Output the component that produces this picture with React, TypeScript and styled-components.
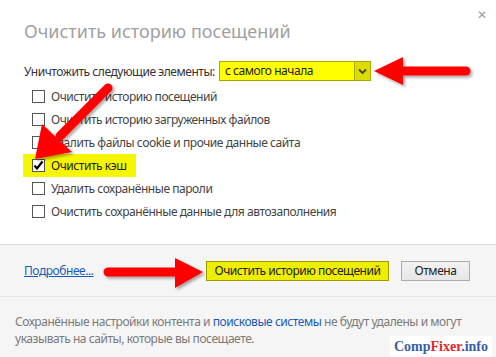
import React from 'react'
import styled, { createGlobalStyle } from 'styled-components'

const GlobalStyle = createGlobalStyle`
  html, body {
    margin: 0;
    padding: 0;
    background: #fff;
  }
`

const Dialog = styled.div`
  position: relative;
  width: 496px;
  height: 357px;
  overflow: hidden;
  background: #fff;
  font-family: "Noto Sans", "Open Sans", sans-serif;
  font-size: 12px;
  letter-spacing: -0.45px;
  color: #333;
`

const CloseButton = styled.span`
  position: absolute;
  top: 9px;
  right: 9px;
  font-size: 12px;
  line-height: 12px;
  color: #9a9a9a;
`

const Title = styled.h1`
  margin: 0;
  padding: 18px 24px 0;
  height: 26px;
  font-size: 18px;
  line-height: 26px;
  font-weight: 400;
  letter-spacing: 0;
  color: #a0a0a0;
`

const Content = styled.div`
  padding: 17px 24px 21px 23px;
`

const RangeRow = styled.div`
  display: flex;
  align-items: center;
  height: 20px;
  padding-left: 1px;
  gap: 4px;
`

const Select = styled.div`
  display: flex;
  width: 152px;
  height: 20px;
  box-sizing: border-box;
  border: 1px solid #a9a900;
  background: #ffff00;
`

const SelectValue = styled.span`
  flex: 1;
  padding-left: 5px;
  line-height: 18px;
  color: #222;
`

const SelectToggle = styled.span`
  width: 15px;
  display: flex;
  align-items: center;
  justify-content: center;
  background: #dcdc00;
  border-left: 1px solid #a9a900;
`

const Options = styled.div`
  display: flex;
  flex-direction: column;
  margin-top: 4px;
`

const Option = styled.label<{ $marked?: boolean }>`
  display: flex;
  align-items: center;
  width: fit-content;
  height: 23px;
  padding: 0 10px 0 9px;
  gap: 6px;
  background: ${p => (p.$marked ? '#f6f600' : 'transparent')};
  color: ${p => (p.$marked ? '#222' : '#444')};
`

const Box = styled.span`
  width: 13px;
  height: 13px;
  box-sizing: border-box;
  border: 1px solid #555;
  background: #fff;
  display: flex;
  align-items: center;
  justify-content: center;
`

const Footer = styled.div`
  display: flex;
  align-items: center;
  height: 51px;
  padding: 0 26px 0 24px;
  border-top: 1px solid #dcdcdc;
  border-bottom: 1px solid #e4e4e4;
  background: #f5f5f5;
`

const MoreLink = styled.a`
  color: #1a5ab8;
  text-decoration: underline;
  margin-right: auto;
`

const Button = styled.button<{ $primary?: boolean }>`
  height: 20px;
  width: ${p => (p.$primary ? '183px' : '69px')};
  box-sizing: border-box;
  margin-left: ${p => (p.$primary ? '0' : '12px')};
  padding: 0;
  font-family: inherit;
  font-size: 12px;
  letter-spacing: inherit;
  color: #222;
  border: 1px solid ${p => (p.$primary ? '#9c9c00' : '#acacac')};
  background: ${p => (p.$primary ? '#eeee00' : 'linear-gradient(#f2f2f2, #e6e6e6)')};
`

const Note = styled.p`
  margin: 0;
  padding: 16px 15px 0;
  line-height: 17px;
  color: #7a7a7a;
  background: #f5f5f5;
  height: 60px;
`

const NoteLink = styled.span`
  color: #1a5ab8;
`

const Watermark = styled.div`
  position: absolute;
  right: 4px;
  bottom: 0;
  height: 21px;
  padding: 0 4px;
  background: #fff;
  font-family: "Liberation Serif", serif;
  font-weight: 700;
  font-size: 14px;
  letter-spacing: 0;
  line-height: 22px;
  color: #3a5ea8;
`

const Red = styled.span`
  color: #e3262a;
`

const Arrows = styled.svg`
  position: absolute;
  left: 0;
  top: 0;
  pointer-events: none;
`

const options = [
  'Очистить историю посещений',
  'Очистить историю загруженных файлов',
  'Удалить файлы cookie и прочие данные сайта',
  'Очистить кэш',
  'Удалить сохранённые пароли',
  'Очистить сохранённые данные для автозаполнения',
]

const Check = () => (
  <svg width="11" height="11" viewBox="0 0 11 11">
    <path d="M1.5 5.5 L4 8.5 L9.5 1.5" fill="none" stroke="#000" strokeWidth="2.2" />
  </svg>
)

const Chevron = () => (
  <svg width="9" height="7" viewBox="0 0 9 7">
    <path d="M1 1.5 L4.5 5 L8 1.5" fill="none" stroke="#444" strokeWidth="1.8" />
  </svg>
)

export default function App() {
  return (
    <Dialog>
      <GlobalStyle />
      <CloseButton>✕</CloseButton>
      <Title>Очистить историю посещений</Title>
      <Content>
        <RangeRow>
          Уничтожить следующие элементы:
          <Select>
            <SelectValue>с самого начала</SelectValue>
            <SelectToggle><Chevron /></SelectToggle>
          </Select>
        </RangeRow>
        <Options>
          {options.map((o, i) => (
            <Option key={i} $marked={i === 3}>
              <Box>{i === 3 && <Check />}</Box>
              {o}
            </Option>
          ))}
        </Options>
      </Content>
      <Footer>
        <MoreLink>Подробнее...</MoreLink>
        <Button $primary>Очистить историю посещений</Button>
        <Button>Отмена</Button>
      </Footer>
      <Note>
        Сохранённые настройки контента и <NoteLink>поисковые системы</NoteLink> не будут удалены и могут
        указывать на сайты, которые вы посещаете.
      </Note>
      <Watermark>
        Comp<Red>Fixer</Red>.info
      </Watermark>
      <Arrows width="496" height="357" viewBox="0 0 496 357">
        <defs>
          <filter id="sh" x="-20%" y="-20%" width="140%" height="140%">
            <feDropShadow dx="2" dy="2" stdDeviation="1.5" floodColor="#000" floodOpacity="0.35" />
          </filter>
        </defs>
        <g fill="#ff0000" filter="url(#sh)">
          <line x1="404" y1="71" x2="466" y2="71" stroke="#ff0000" strokeWidth="9" strokeLinecap="round" />
          <polygon points="374,71 403,57 403,85" />
          <line x1="108" y1="272" x2="176" y2="272" stroke="#ff0000" strokeWidth="9" strokeLinecap="round" />
          <polygon points="203,272 175,258 175,288" />
          <line x1="108" y1="88" x2="60" y2="136" stroke="#ff0000" strokeWidth="9" strokeLinecap="round" />
          <polygon points="35,159 42,124 72,152" />
        </g>
      </Arrows>
    </Dialog>
  )
}
